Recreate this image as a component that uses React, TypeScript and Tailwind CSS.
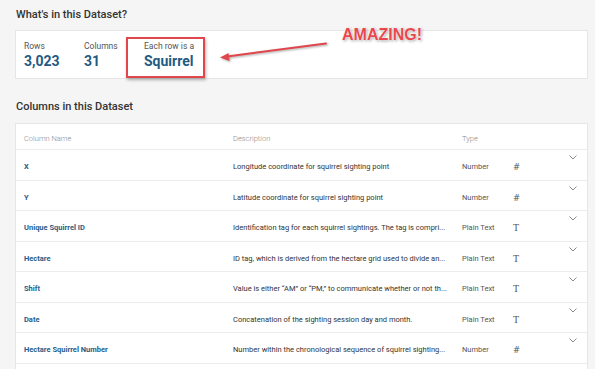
import React from "react";

const rows = [
  { name: "X", desc: "Longitude coordinate for squirrel sighting point", type: "Number", icon: "#" },
  { name: "Y", desc: "Latitude coordinate for squirrel sighting point", type: "Number", icon: "#" },
  { name: "Unique Squirrel ID", desc: "Identification tag for each squirrel sightings. The tag is compri...", type: "Plain Text", icon: "T" },
  { name: "Hectare", desc: "ID tag, which is derived from the hectare grid used to divide an...", type: "Plain Text", icon: "T" },
  { name: "Shift", desc: "Value is either \u201CAM\u201D or \u201CPM,\u201D to communicate whether or not th...", type: "Plain Text", icon: "T" },
  { name: "Date", desc: "Concatenation of the sighting session day and month.", type: "Plain Text", icon: "T" },
  { name: "Hectare Squirrel Number", desc: "Number within the chronological sequence of squirrel sighting...", type: "Number", icon: "#" },
];

function Chevron() {
  return (
    <svg width="8" height="5" viewBox="0 0 8 5" className="block">
      <polyline points="0.5,0.5 4,4 7.5,0.5" fill="none" stroke="#8a8a8a" strokeWidth="1" />
    </svg>
  );
}

export default function App() {
  return (
    <div className="relative h-[369px] w-[595px] overflow-hidden bg-[#f5f5f5] font-['Roboto','Liberation_Sans',sans-serif] text-[#333]">
      <div className="pl-[15px] pr-[7px]">
        <h2 className="pt-[8px] pl-[1px] text-[11px] font-medium leading-[14px] text-[#333]">What's in this Dataset?</h2>
        <div className="mt-[8px] h-[49px] border border-[#e6e6e6] bg-white pl-[8px] pt-[10px]">
          <div className="flex">
            <div className="w-[60px]">
              <div className="text-[8.5px] leading-[10px] text-[#555]">Rows</div>
              <div className="mt-[1px] text-[14px] font-bold leading-[18px] text-[#1f5a82]">3,023</div>
            </div>
            <div className="w-[60px]">
              <div className="text-[8.5px] leading-[10px] text-[#555]">Columns</div>
              <div className="mt-[1px] text-[14px] font-bold leading-[18px] text-[#1f5a82]">31</div>
            </div>
            <div className="w-[80px]">
              <div className="text-[8.5px] leading-[10px] text-[#555]">Each row is a</div>
              <div className="mt-[1px] text-[14px] font-bold leading-[18px] text-[#1f5a82]">Squirrel</div>
            </div>
          </div>
        </div>

        <h2 className="mt-[21px] pl-[1px] text-[11px] font-medium leading-[14px] text-[#333]">Columns in this Dataset</h2>
        <div className="mt-[9px] border border-[#e6e6e6] bg-white">
          <div className="grid h-[26px] grid-cols-[209px_229px_51px_1fr] border-b border-[#ececec] pl-[8px] pt-[10px] text-[7.5px] font-light leading-[10px] text-[#8a8a8a]">
            <div>Column Name</div>
            <div>Description</div>
            <div>Type</div>
            <div />
          </div>
          {rows.map((r) => (
            <div
              key={r.name}
              className="grid h-[30.5px] grid-cols-[209px_229px_51px_1fr] border-b border-[#ececec] pl-[8px] pt-[12px] text-[7.5px] leading-[10px]"
            >
              <div className="font-bold text-[#2a5d86]">{r.name}</div>
              <div className="overflow-hidden whitespace-nowrap text-[#333]">{r.desc}</div>
              <div className="text-[#555]">{r.type}</div>
              <div className="flex items-start justify-between pr-[10px]">
                {r.icon === "#" ? (
                  <span className="font-['DejaVu_Sans',sans-serif] text-[8.5px] leading-[10px] text-[#555]">#</span>
                ) : (
                  <span className="font-['Liberation_Serif',serif] text-[10px] leading-[10px] text-[#555]">T</span>
                )}
                <div className="-mt-[7px]">
                  <Chevron />
                </div>
              </div>
            </div>
          ))}
          <div className="h-[30px]" />
        </div>
      </div>

      {/* annotation overlay */}
      <div className="absolute left-[126px] top-[37px] h-[41px] w-[79px] border-2 border-[#e0474c] shadow-[1px_2px_3px_rgba(0,0,0,0.3)]" />
      <svg
        className="pointer-events-none absolute left-0 top-0 drop-shadow-[1px_1px_1px_rgba(0,0,0,0.35)]"
        width="595"
        height="369"
        viewBox="0 0 595 369"
      >
        <line x1="326" y1="43.5" x2="227" y2="56.5" stroke="#e0474c" strokeWidth="2" strokeLinecap="round" />
        <polygon points="220,57.5 229.5,61 228.5,53" fill="#e0474c" />
      </svg>
      <div className="absolute left-[342px] top-[25px] font-['Liberation_Sans',Arial,sans-serif] text-[16px] font-bold leading-[20px] text-[#e8474e] [text-shadow:0_0_1px_#fff,0_0_2px_#fff,1px_1px_3px_rgba(0,0,0,0.45)]">
        AMAZING!
      </div>
    </div>
  );
}
